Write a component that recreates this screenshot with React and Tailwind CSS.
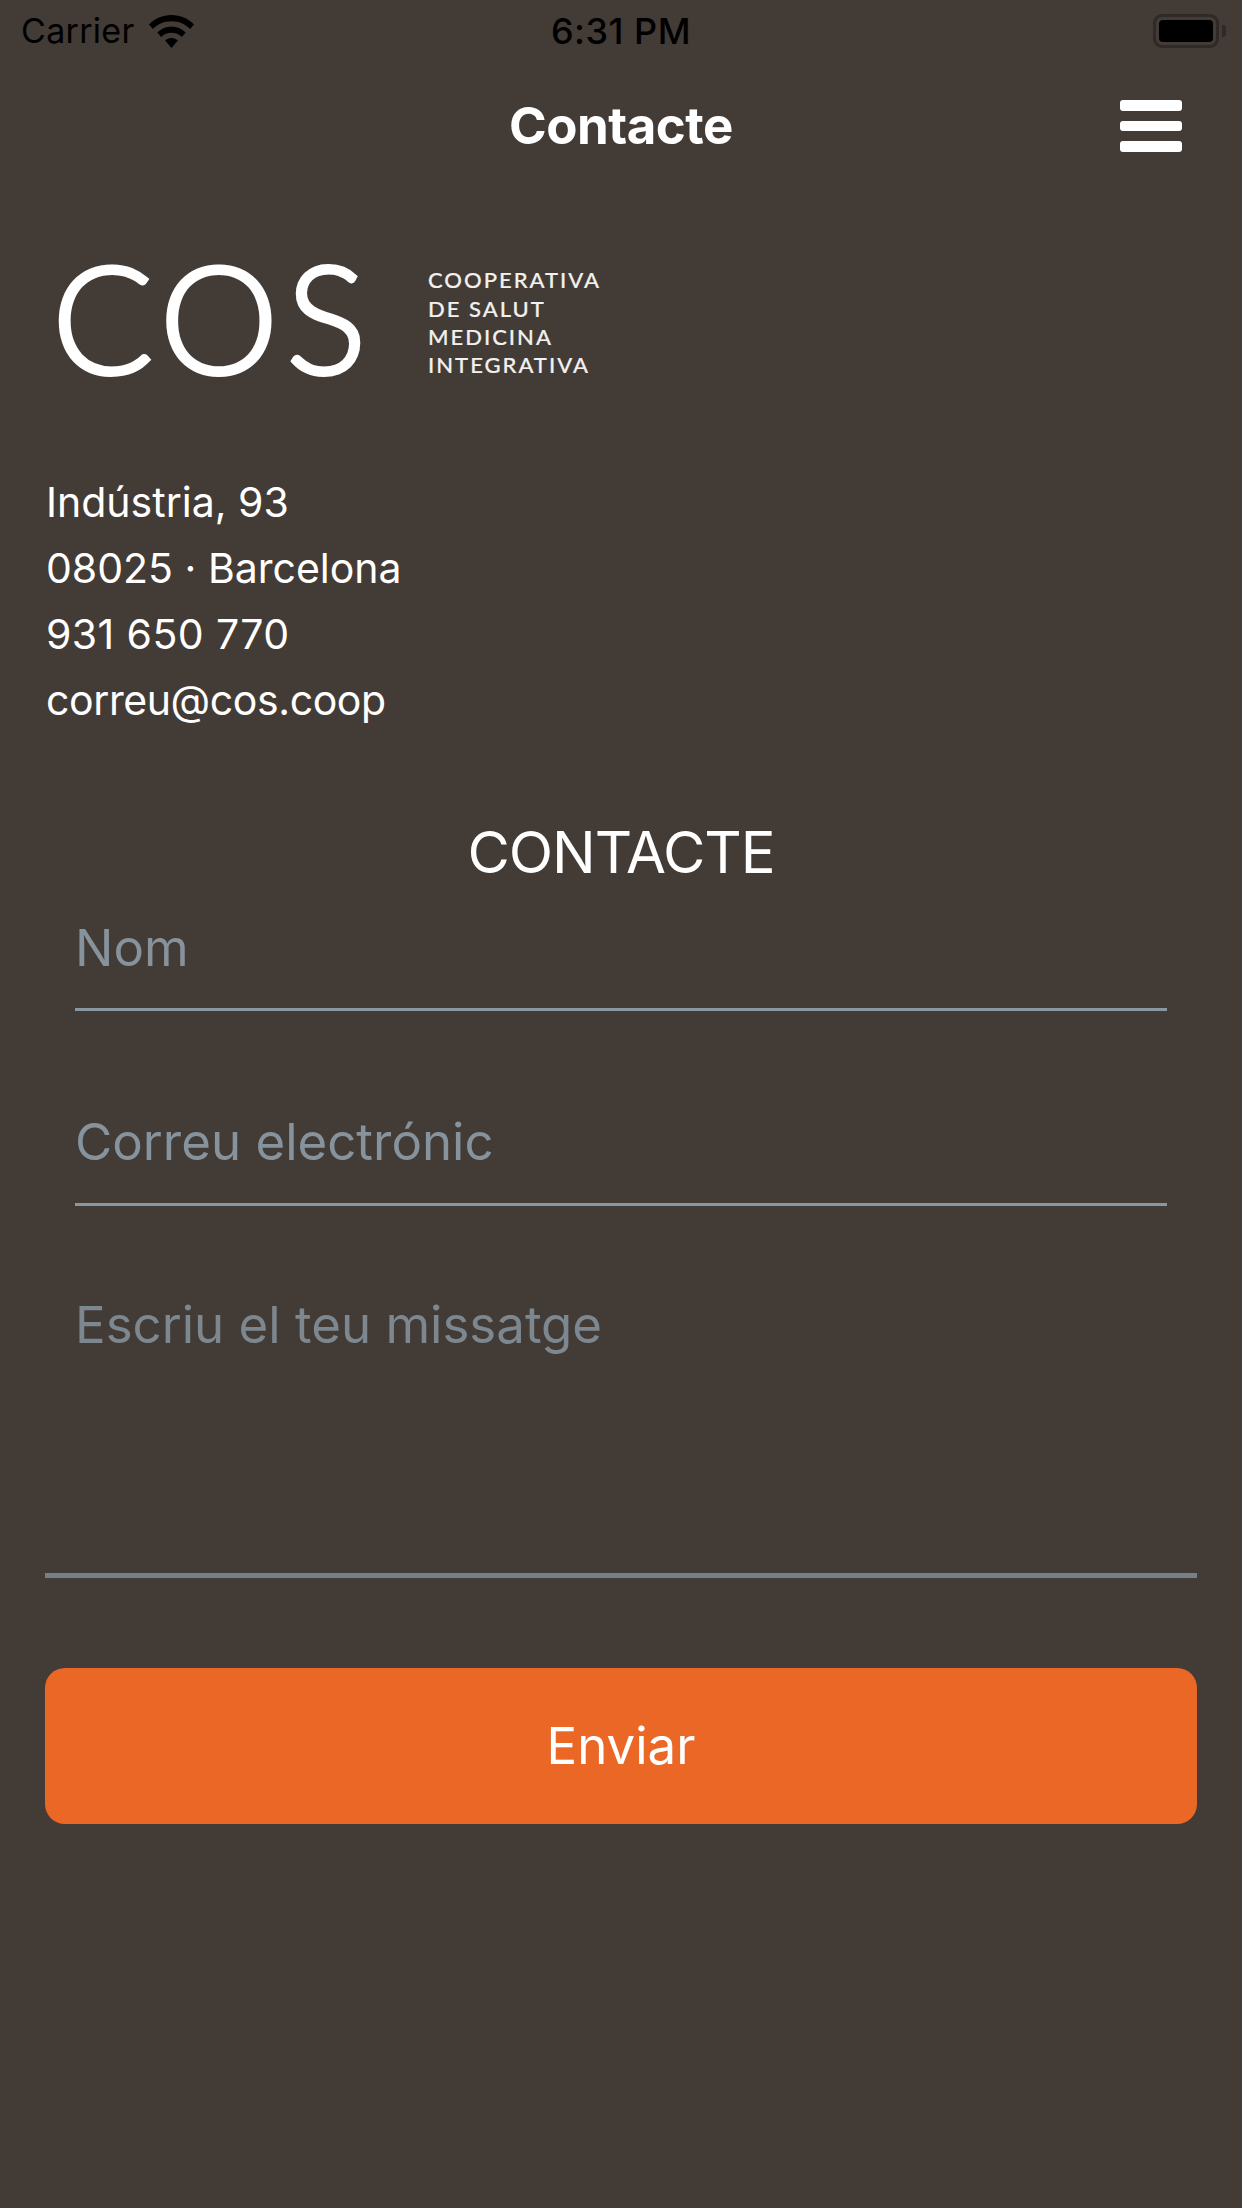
const sf = "font-['Inter','Liberation_Sans',sans-serif]";

function Wifi() {
  return (
    <svg width="45" height="33" viewBox="1 0 46 33" preserveAspectRatio="none" className="ml-[14px]">
      <path d="M24 0C15 0 7 3.500 1 9.500L5 14C10 9 16.500 6.300 24 6.300S38 9 43 14L47 9.500C41 3.500 33 0 24 0Z" fill="#000" />
      <path d="M24 11.500C18.500 11.500 13.500 13.600 9.500 17.500L13.500 22C16.500 19.200 20 17.800 24 17.800S31.500 19.200 34.500 22L38.500 17.500C34.500 13.600 29.500 11.500 24 11.500Z" fill="#000" />
      <path d="M24 23C21.500 23 19.300 24 17.500 25.600L24 33L30.500 25.600C28.700 24 26.500 23 24 23Z" fill="#000" />
    </svg>
  );
}

function Battery() {
  return (
    <div className="flex items-center">
      <div className="w-[66px] h-[34px] rounded-[9px] border-[3px] border-[#2f2a27] p-[3px]">
        <div className="w-full h-full rounded-[4px] bg-black" />
      </div>
      <div className="ml-[3px] w-[4px] h-[12px] rounded-r-[3px] bg-[#2f2a27]" />
    </div>
  );
}

export default function App() {
  return (
    <div className={`${sf} w-[1242px] h-[2208px] bg-[#433b36] overflow-hidden text-white`}>
      <div className="relative h-[60px] flex items-center justify-between pl-[21px] pr-[16px] pt-[2px] text-black">
        <div className="flex items-center">
          <span className="text-[34px] leading-none tracking-[0.3px]">Carrier</span>
          <Wifi />
        </div>
        <span className="absolute left-0 right-0 text-center text-[36px] leading-none font-medium tracking-[0.5px]">6:31 PM</span>
        <Battery />
      </div>

      <div className="relative h-[132px] flex items-center justify-center pb-[2px]">
        <h1 className="text-[51px] font-bold leading-none tracking-[-0.5px]">Contacte</h1>
        <div className="absolute right-[60px] top-[40px] w-[62px] flex flex-col gap-[10px]">
          <div className="h-[10.5px] rounded-[3px] bg-white" />
          <div className="h-[10.5px] rounded-[3px] bg-white" />
          <div className="h-[10.5px] rounded-[3px] bg-white" />
        </div>
      </div>

      <div className="pl-[52px] mt-[59px] h-[130px] flex items-center">
        <span className="font-['Lato',sans-serif] font-light text-[150px] leading-none tracking-[8px] w-[376px] [-webkit-text-stroke:4px_white]">COS</span>
        <div className="font-['Lato',sans-serif] pt-[14px] text-[22px] leading-[28.300px] tracking-[2px] font-medium text-[#f2f1ef] [-webkit-text-stroke:0.2px_#f2f1ef]">
          <div>COOPERATIVA</div>
          <div>DE SALUT</div>
          <div>MEDICINA</div>
          <div>INTEGRATIVA</div>
        </div>
      </div>

      <div className="pl-[46px] mt-[88px] text-[41px] leading-[66px]">
        <div>Indústria, 93</div>
        <div>08025 · Barcelona</div>
        <div className="tracking-[0.4px]">931 650 770</div>
        <div className="tracking-[-0.4px]">correu@cos.coop</div>
      </div>

      <h2 className="mt-[84px] text-center text-[58px] leading-[70px] tracking-[-1.100px]">CONTACTE</h2>

      <div className="mt-[30px] mx-[75px]">
        <input readOnly placeholder="Nom" className="block w-full h-[94px] bg-transparent border-b-[3px] border-[#8a97a3] text-[51px] outline-none placeholder:text-[#86929c] pb-[31px]" />
      </div>
      <div className="mt-[100px] mx-[75px]">
        <input readOnly placeholder="Correu electrónic" className="block w-full h-[95px] bg-transparent border-b-[3px] border-[#8a97a3] text-[51px] outline-none placeholder:text-[#86929c] pb-[31px]" />
      </div>
      <div className="mx-[45px]">
        <textarea readOnly placeholder="Escriu el teu missatge" className="block w-full h-[372px] resize-none bg-transparent border-b-[5px] border-[#74808a] text-[51px] leading-[58px] outline-none placeholder:text-[#7d8790] pl-[30px] pt-[90px]" />
      </div>

      <button className="block mt-[90px] mx-[45px] w-[1152px] h-[156px] rounded-[20px] bg-[#eb6726] text-[51px] text-white">Enviar</button>
    </div>
  );
}
